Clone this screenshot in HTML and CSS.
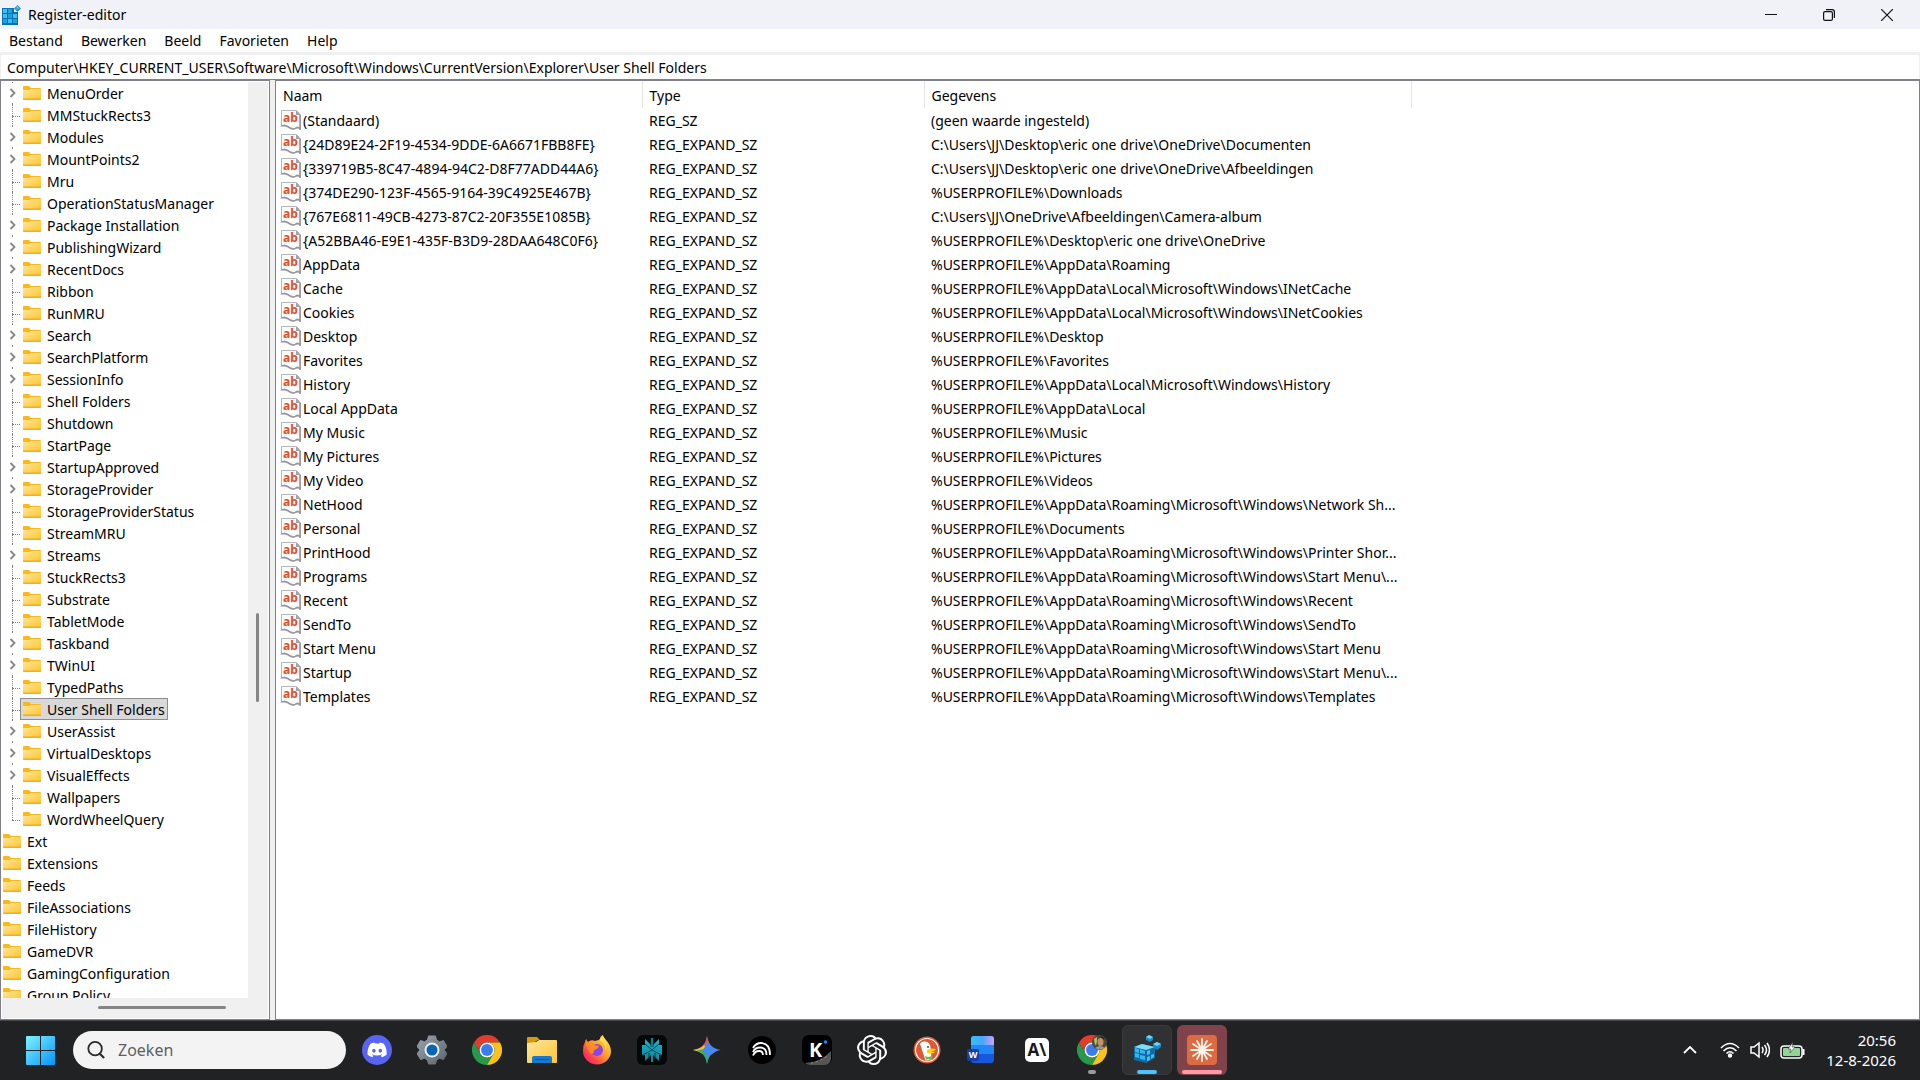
FILE: index.html
```html
<!DOCTYPE html>
<html lang="nl">
<head>
<meta charset="utf-8">
<meta name="viewport" content="width=device-width, initial-scale=1">
<title>Register-editor</title>
<link rel="stylesheet" href="styles.css">
</head>
<body>
<svg class="defs" aria-hidden="true">
  <defs>
    <linearGradient id="gFolder" x1="0" y1="0" x2="1" y2="1"><stop offset="0" stop-color="#ffe69c"/><stop offset="1" stop-color="#fdc62f"/></linearGradient>
    <linearGradient id="gWin" x1="0" y1="0" x2="1" y2="1"><stop offset="0" stop-color="#7df4ff"/><stop offset="1" stop-color="#0594fb"/></linearGradient>
    <linearGradient id="gFox" x1="1" y1="0" x2="0" y2="1"><stop offset="0" stop-color="#fff44f"/><stop offset=".45" stop-color="#ff9a2a"/><stop offset=".75" stop-color="#ff3b50"/><stop offset="1" stop-color="#e31587"/></linearGradient>
    <linearGradient id="gWord" x1="0" y1="0" x2="1" y2="0"><stop offset="0" stop-color="#2ec4f6"/><stop offset=".5" stop-color="#4aa6ff"/><stop offset="1" stop-color="#c9a2ff"/></linearGradient>
    <linearGradient id="gGear" x1="0" y1="0" x2="1" y2="1"><stop offset="0" stop-color="#9aa3ab"/><stop offset="1" stop-color="#5c646c"/></linearGradient>
    <linearGradient id="gPplx" x1="0" y1="0" x2="0" y2="1"><stop offset="0" stop-color="#1fb8cd"/><stop offset="1" stop-color="#0e7f92"/></linearGradient>
  </defs>
  <symbol id="folder" viewBox="0 0 18 14">
    <path d="M0 1q0-1 1-1h5l2 2h9q1 0 1 1v10q0 1-1 1H1q-1 0-1-1z" fill="#fbb917"/>
    <path d="M0 4h7l1-1h10v10H0z" fill="url(#gFolder)"/>
    <path d="M0 13h18" stroke="#eda81c"/>
  </symbol>
  <symbol id="chev" viewBox="0 0 8 10"><path d="M1.5 1l4 4-4 4" fill="none" stroke="#868686" stroke-width="1.8"/></symbol>
  <symbol id="ab" viewBox="0 0 20 20">
    <path d="M.5 .5h15l4 4v14.500q-2.500-1.500-4.500-1t-4 .8-4.500-2.300-6-.5z" fill="#fafafa" stroke="#b5b5b5"/>
    <path d="M.5 16q3.500-1 6 .5t4.500 2.300 4-.8 4 1V5" fill="none" stroke="#989898" stroke-width="1.600"/>
    <path d="M15 .5v4.500h4.500z" fill="#a2a2a2"/>
    <text x="2" y="12" font-size="12" font-weight="700" fill="#d9512c" font-family="Open Sans, sans-serif">ab</text>
  </symbol>
  <symbol id="chrome" viewBox="0 0 48 48">
    <path d="M3.200 12a24 24 0 0 1 41.600 0H24a12 12 0 0 0-10.400 18z" fill="#e33b2e"/>
    <path d="M3.200 12l10.400 18a12 12 0 0 0 20.800 0L24 48A24 24 0 0 1 3.200 12z" fill="#269a4a"/>
    <path d="M44.800 12H24a12 12 0 0 1 10.400 18L24 48a24 24 0 0 0 20.800-36z" fill="#fcc21a"/>
    <circle cx="24" cy="24" r="12" fill="#fff"/><circle cx="24" cy="24" r="9.500" fill="#3b7ded"/>
  </symbol>
</svg>

<header class="titlebar">
  <svg class="app-icon" viewBox="0 0 20 20"><path d="M0 3h12v4h4v13H0z" fill="#0873b3"/><path d="M1 4h4v4H1zM1 9h4v4H1zM6 14h4v4H6zM11 9h4v4h-4z" fill="#41bdf0"/><path d="M6 4h4v4H6zM6 9h4v4H6zM1 14h4v4H1zM11 14h4v4h-4z" fill="#1da0df"/><path d="M15.500 0L19 3.500 15.500 7 12 3.500z" fill="#2b94c8"/><path d="M15.500 1L17 3.500H14z" fill="#7ad2f4"/></svg>
  <h1 class="title">Register-editor</h1>
  <div class="window-buttons">
    <button type="button" aria-label="Minimaliseren"><svg viewBox="0 0 12 12"><path d="M0 5.500h12" stroke="#111"/></svg></button>
    <button type="button" aria-label="Vorig formaat"><svg viewBox="0 0 12 12" fill="none" stroke="#111" stroke-width="1.200"><rect x=".6" y="2.600" width="8.800" height="8.800" rx="1.500"/><path d="M3 .6h6q2.400 0 2.400 2.400v6"/></svg></button>
    <button type="button" aria-label="Sluiten"><svg viewBox="0 0 12 12"><path d="M0 0l12 12M12 0L0 12" stroke="#111" stroke-width="1.200"/></svg></button>
  </div>
</header>
<nav class="menubar" aria-label="Menu">
  <button type="button">Bestand</button><button type="button">Bewerken</button><button type="button">Beeld</button><button type="button">Favorieten</button><button type="button">Help</button>
</nav>
<div class="address"><input type="text" aria-label="Adres" value="Computer\HKEY_CURRENT_USER\Software\Microsoft\Windows\CurrentVersion\Explorer\User Shell Folders"></div>

<main class="panes">
  <section class="tree-pane" aria-label="Sleutels">
    <ul class="tree">
      <li class="child"><button class="twist" type="button" aria-label="Uitvouwen"><svg><use href="#chev"/></svg></button><span class="node"><svg><use href="#folder"/></svg>MenuOrder</span></li>
      <li class="child leaf"><span class="node"><svg><use href="#folder"/></svg>MMStuckRects3</span></li>
      <li class="child"><button class="twist" type="button" aria-label="Uitvouwen"><svg><use href="#chev"/></svg></button><span class="node"><svg><use href="#folder"/></svg>Modules</span></li>
      <li class="child"><button class="twist" type="button" aria-label="Uitvouwen"><svg><use href="#chev"/></svg></button><span class="node"><svg><use href="#folder"/></svg>MountPoints2</span></li>
      <li class="child leaf"><span class="node"><svg><use href="#folder"/></svg>Mru</span></li>
      <li class="child leaf"><span class="node"><svg><use href="#folder"/></svg>OperationStatusManager</span></li>
      <li class="child"><button class="twist" type="button" aria-label="Uitvouwen"><svg><use href="#chev"/></svg></button><span class="node"><svg><use href="#folder"/></svg>Package Installation</span></li>
      <li class="child"><button class="twist" type="button" aria-label="Uitvouwen"><svg><use href="#chev"/></svg></button><span class="node"><svg><use href="#folder"/></svg>PublishingWizard</span></li>
      <li class="child"><button class="twist" type="button" aria-label="Uitvouwen"><svg><use href="#chev"/></svg></button><span class="node"><svg><use href="#folder"/></svg>RecentDocs</span></li>
      <li class="child leaf"><span class="node"><svg><use href="#folder"/></svg>Ribbon</span></li>
      <li class="child leaf"><span class="node"><svg><use href="#folder"/></svg>RunMRU</span></li>
      <li class="child"><button class="twist" type="button" aria-label="Uitvouwen"><svg><use href="#chev"/></svg></button><span class="node"><svg><use href="#folder"/></svg>Search</span></li>
      <li class="child"><button class="twist" type="button" aria-label="Uitvouwen"><svg><use href="#chev"/></svg></button><span class="node"><svg><use href="#folder"/></svg>SearchPlatform</span></li>
      <li class="child"><button class="twist" type="button" aria-label="Uitvouwen"><svg><use href="#chev"/></svg></button><span class="node"><svg><use href="#folder"/></svg>SessionInfo</span></li>
      <li class="child leaf"><span class="node"><svg><use href="#folder"/></svg>Shell Folders</span></li>
      <li class="child leaf"><span class="node"><svg><use href="#folder"/></svg>Shutdown</span></li>
      <li class="child leaf"><span class="node"><svg><use href="#folder"/></svg>StartPage</span></li>
      <li class="child"><button class="twist" type="button" aria-label="Uitvouwen"><svg><use href="#chev"/></svg></button><span class="node"><svg><use href="#folder"/></svg>StartupApproved</span></li>
      <li class="child"><button class="twist" type="button" aria-label="Uitvouwen"><svg><use href="#chev"/></svg></button><span class="node"><svg><use href="#folder"/></svg>StorageProvider</span></li>
      <li class="child leaf"><span class="node"><svg><use href="#folder"/></svg>StorageProviderStatus</span></li>
      <li class="child leaf"><span class="node"><svg><use href="#folder"/></svg>StreamMRU</span></li>
      <li class="child"><button class="twist" type="button" aria-label="Uitvouwen"><svg><use href="#chev"/></svg></button><span class="node"><svg><use href="#folder"/></svg>Streams</span></li>
      <li class="child leaf"><span class="node"><svg><use href="#folder"/></svg>StuckRects3</span></li>
      <li class="child leaf"><span class="node"><svg><use href="#folder"/></svg>Substrate</span></li>
      <li class="child leaf"><span class="node"><svg><use href="#folder"/></svg>TabletMode</span></li>
      <li class="child"><button class="twist" type="button" aria-label="Uitvouwen"><svg><use href="#chev"/></svg></button><span class="node"><svg><use href="#folder"/></svg>Taskband</span></li>
      <li class="child"><button class="twist" type="button" aria-label="Uitvouwen"><svg><use href="#chev"/></svg></button><span class="node"><svg><use href="#folder"/></svg>TWinUI</span></li>
      <li class="child leaf"><span class="node"><svg><use href="#folder"/></svg>TypedPaths</span></li>
      <li class="child leaf"><span class="node selected"><svg><use href="#folder"/></svg>User Shell Folders</span></li>
      <li class="child"><button class="twist" type="button" aria-label="Uitvouwen"><svg><use href="#chev"/></svg></button><span class="node"><svg><use href="#folder"/></svg>UserAssist</span></li>
      <li class="child"><button class="twist" type="button" aria-label="Uitvouwen"><svg><use href="#chev"/></svg></button><span class="node"><svg><use href="#folder"/></svg>VirtualDesktops</span></li>
      <li class="child"><button class="twist" type="button" aria-label="Uitvouwen"><svg><use href="#chev"/></svg></button><span class="node"><svg><use href="#folder"/></svg>VisualEffects</span></li>
      <li class="child leaf"><span class="node"><svg><use href="#folder"/></svg>Wallpapers</span></li>
      <li class="child leaf last"><span class="node"><svg><use href="#folder"/></svg>WordWheelQuery</span></li>
      <li><span class="node"><svg><use href="#folder"/></svg>Ext</span></li>
      <li><span class="node"><svg><use href="#folder"/></svg>Extensions</span></li>
      <li><span class="node"><svg><use href="#folder"/></svg>Feeds</span></li>
      <li><span class="node"><svg><use href="#folder"/></svg>FileAssociations</span></li>
      <li><span class="node"><svg><use href="#folder"/></svg>FileHistory</span></li>
      <li><span class="node"><svg><use href="#folder"/></svg>GameDVR</span></li>
      <li><span class="node"><svg><use href="#folder"/></svg>GamingConfiguration</span></li>
      <li><span class="node"><svg><use href="#folder"/></svg>Group Policy</span></li>
    </ul>
    <div class="vscroll"><i></i></div>
    <div class="hscroll"><i></i></div>
  </section>

  <section class="list-pane" aria-label="Waarden">
    <table>
      <colgroup><col class="c-name"><col class="c-type"><col class="c-data"><col></colgroup>
      <thead><tr><th scope="col">Naam</th><th scope="col">Type</th><th scope="col">Gegevens</th><td></td></tr></thead>
      <tbody>
        <tr><td><svg><use href="#ab"/></svg>(Standaard)</td><td>REG_SZ</td><td>(geen waarde ingesteld)</td></tr>
        <tr><td><svg><use href="#ab"/></svg>{24D89E24-2F19-4534-9DDE-6A6671FBB8FE}</td><td>REG_EXPAND_SZ</td><td>C:\Users\JJ\Desktop\eric one drive\OneDrive\Documenten</td></tr>
        <tr><td><svg><use href="#ab"/></svg>{339719B5-8C47-4894-94C2-D8F77ADD44A6}</td><td>REG_EXPAND_SZ</td><td>C:\Users\JJ\Desktop\eric one drive\OneDrive\Afbeeldingen</td></tr>
        <tr><td><svg><use href="#ab"/></svg>{374DE290-123F-4565-9164-39C4925E467B}</td><td>REG_EXPAND_SZ</td><td>%USERPROFILE%\Downloads</td></tr>
        <tr><td><svg><use href="#ab"/></svg>{767E6811-49CB-4273-87C2-20F355E1085B}</td><td>REG_EXPAND_SZ</td><td>C:\Users\JJ\OneDrive\Afbeeldingen\Camera-album</td></tr>
        <tr><td><svg><use href="#ab"/></svg>{A52BBA46-E9E1-435F-B3D9-28DAA648C0F6}</td><td>REG_EXPAND_SZ</td><td>%USERPROFILE%\Desktop\eric one drive\OneDrive</td></tr>
        <tr><td><svg><use href="#ab"/></svg>AppData</td><td>REG_EXPAND_SZ</td><td>%USERPROFILE%\AppData\Roaming</td></tr>
        <tr><td><svg><use href="#ab"/></svg>Cache</td><td>REG_EXPAND_SZ</td><td>%USERPROFILE%\AppData\Local\Microsoft\Windows\INetCache</td></tr>
        <tr><td><svg><use href="#ab"/></svg>Cookies</td><td>REG_EXPAND_SZ</td><td>%USERPROFILE%\AppData\Local\Microsoft\Windows\INetCookies</td></tr>
        <tr><td><svg><use href="#ab"/></svg>Desktop</td><td>REG_EXPAND_SZ</td><td>%USERPROFILE%\Desktop</td></tr>
        <tr><td><svg><use href="#ab"/></svg>Favorites</td><td>REG_EXPAND_SZ</td><td>%USERPROFILE%\Favorites</td></tr>
        <tr><td><svg><use href="#ab"/></svg>History</td><td>REG_EXPAND_SZ</td><td>%USERPROFILE%\AppData\Local\Microsoft\Windows\History</td></tr>
        <tr><td><svg><use href="#ab"/></svg>Local AppData</td><td>REG_EXPAND_SZ</td><td>%USERPROFILE%\AppData\Local</td></tr>
        <tr><td><svg><use href="#ab"/></svg>My Music</td><td>REG_EXPAND_SZ</td><td>%USERPROFILE%\Music</td></tr>
        <tr><td><svg><use href="#ab"/></svg>My Pictures</td><td>REG_EXPAND_SZ</td><td>%USERPROFILE%\Pictures</td></tr>
        <tr><td><svg><use href="#ab"/></svg>My Video</td><td>REG_EXPAND_SZ</td><td>%USERPROFILE%\Videos</td></tr>
        <tr><td><svg><use href="#ab"/></svg>NetHood</td><td>REG_EXPAND_SZ</td><td>%USERPROFILE%\AppData\Roaming\Microsoft\Windows\Network Sh...</td></tr>
        <tr><td><svg><use href="#ab"/></svg>Personal</td><td>REG_EXPAND_SZ</td><td>%USERPROFILE%\Documents</td></tr>
        <tr><td><svg><use href="#ab"/></svg>PrintHood</td><td>REG_EXPAND_SZ</td><td>%USERPROFILE%\AppData\Roaming\Microsoft\Windows\Printer Shor...</td></tr>
        <tr><td><svg><use href="#ab"/></svg>Programs</td><td>REG_EXPAND_SZ</td><td>%USERPROFILE%\AppData\Roaming\Microsoft\Windows\Start Menu\...</td></tr>
        <tr><td><svg><use href="#ab"/></svg>Recent</td><td>REG_EXPAND_SZ</td><td>%USERPROFILE%\AppData\Roaming\Microsoft\Windows\Recent</td></tr>
        <tr><td><svg><use href="#ab"/></svg>SendTo</td><td>REG_EXPAND_SZ</td><td>%USERPROFILE%\AppData\Roaming\Microsoft\Windows\SendTo</td></tr>
        <tr><td><svg><use href="#ab"/></svg>Start Menu</td><td>REG_EXPAND_SZ</td><td>%USERPROFILE%\AppData\Roaming\Microsoft\Windows\Start Menu</td></tr>
        <tr><td><svg><use href="#ab"/></svg>Startup</td><td>REG_EXPAND_SZ</td><td>%USERPROFILE%\AppData\Roaming\Microsoft\Windows\Start Menu\...</td></tr>
        <tr><td><svg><use href="#ab"/></svg>Templates</td><td>REG_EXPAND_SZ</td><td>%USERPROFILE%\AppData\Roaming\Microsoft\Windows\Templates</td></tr>
      </tbody>
    </table>
  </section>
</main>

<footer class="taskbar">
  <button class="start" type="button" aria-label="Start"><svg viewBox="0 0 29 29"><path d="M1 0h13v14H0V1q0-1 1-1zM15 0h13q1 0 1 1v13H15zM0 15h14v14H1q-1 0-1-1zM15 15h14v13q0 1-1 1H15z" fill="url(#gWin)"/></svg></button>
  <label class="search"><svg viewBox="0 0 20 20" fill="none" stroke="#2b2b2b" stroke-width="2"><circle cx="9" cy="8.500" r="7.500"/><path d="M14 14l5 5" stroke-width="2.400"/></svg><input type="text" placeholder="Zoeken" aria-label="Zoeken"></label>
  <div class="apps">
    <button type="button" aria-label="Discord"><svg viewBox="0 0 30 30"><circle cx="15" cy="15" r="15" fill="#5865f2"/><g transform="translate(5.500 5.300) scale(.8)"><path fill="#fff" d="M20.317 4.3698a19.7913 19.7913 0 00-4.8851-1.5152.0741.0741 0 00-.0785.0371c-.211.3753-.4447.8648-.6083 1.2495-1.8447-.2762-3.68-.2762-5.4868 0-.1636-.3933-.4058-.8742-.6177-1.2495a.077.077 0 00-.0785-.037 19.7363 19.7363 0 00-4.8852 1.515.0699.0699 0 00-.0321.0277C.5334 9.0458-.319 13.5799.0992 18.0578a.0824.0824 0 00.0312.0561c2.0528 1.5076 4.0413 2.4228 5.9929 3.0294a.0777.0777 0 00.0842-.0276c.4616-.6304.8731-1.2952 1.226-1.9942a.076.076 0 00-.0416-.1057c-.6528-.2476-1.2743-.5495-1.8722-.8923a.077.077 0 01-.0076-.1277c.1258-.0943.2517-.1923.3718-.2914a.0743.0743 0 01.0776-.0105c3.9278 1.7933 8.18 1.7933 12.0614 0a.0739.0739 0 01.0785.0095c.1202.099.246.1981.3728.2924a.077.077 0 01-.0066.1276 12.2986 12.2986 0 01-1.873.8914.0766.0766 0 00-.0407.1067c.3604.698.7719 1.3628 1.225 1.9932a.076.076 0 00.0842.0286c1.961-.6067 3.9495-1.5219 6.0023-3.0294a.077.077 0 00.0313-.0552c.5004-5.177-.8382-9.6739-3.5485-13.6604a.061.061 0 00-.0312-.0286zM8.02 15.3312c-1.1825 0-2.1569-1.0857-2.1569-2.419 0-1.3332.9555-2.4189 2.157-2.4189 1.2108 0 2.1757 1.0952 2.1568 2.419 0 1.3332-.9555 2.4189-2.1569 2.4189zm7.9748 0c-1.1825 0-2.1569-1.0857-2.1569-2.419 0-1.3332.9554-2.4189 2.1569-2.4189 1.2108 0 2.1757 1.0952 2.1568 2.419 0 1.3332-.946 2.4189-2.1568 2.4189Z"/></g></svg></button>
    <button type="button" aria-label="Instellingen"><svg viewBox="0 0 30 30"><path d="M11.500 1h7l1 4 3 1.800 4-1.200L30 11.500 27 15l3 3.500-3.500 6-4-1.200-3 1.700-1 4h-7l-1-4-3-1.700-4 1.200L0 18.500 3 15 0 11.500l3.500-6 4 1.200 3-1.700z" fill="url(#gGear)" stroke="url(#gGear)" stroke-linejoin="round"/><circle cx="15" cy="15" r="7.500" fill="#e9eef2"/><circle cx="15" cy="15" r="5.500" fill="#0a64b4"/></svg></button>
    <button type="button" aria-label="Chrome"><svg><use href="#chrome"/></svg></button>
    <button type="button" aria-label="Verkenner"><svg viewBox="0 0 30 30"><path d="M0 3q0-1 1-1h9l3 3h-2L0 12z" fill="#d99a08"/><path d="M0 8l9-1 3-2h17q1 0 1 1v21q0 1-1 1H1q-1 0-1-1z" fill="url(#gFolder)"/><path d="M5 28v-5q0-2 2-2h16q2 0 2 2v5z" fill="#1679cf"/><path d="M8 24.500h14" stroke="#0d5396"/></svg></button>
    <button type="button" aria-label="Firefox"><svg viewBox="0 0 30 30"><path d="M1 16q-.5-5 2-9 0-2 1.500-3 0 2 1.500 3Q9 4 13 6q3-1 4.500-1 0-3 3-5 1 3 3 4.500 5 5 5.500 11.500A14 13.500 0 0 1 1 16z" fill="url(#gFox)"/><circle cx="15" cy="15" r="6" fill="#8a45e8"/><path d="M4 7q4-1 8 2 0 1.500 3 1.500 2 0 2 1-1.500 2.500-4 3-2 1-1.500 3.500Q8 20 7 16q-3-3-3-9z" fill="#ff8b24"/><path d="M17 5q6 2 6.500 10 3-7-3-15-1 3-3.500 5z" fill="#ffe04a"/></svg></button>
    <button type="button" aria-label="Perplexity"><svg viewBox="0 0 30 30"><rect width="30" height="30" rx="6" fill="#050808"/><path d="M5 10h3V4l6 6V3h2v7l6-6v6h3v10h-3v6l-6-6v7h-2v-7l-6 6v-6H5z" fill="url(#gPplx)"/><path d="M15 15L5 20.500M15 15l10 5.500M15 15L8 9M15 15l7-6M12 18v6M18 18v6M14 3v9M16 3v9" fill="none" stroke="#053c45" stroke-width=".9"/></svg></button>
    <button type="button" aria-label="Gemini"><svg viewBox="0 0 30 30"><path d="M15 1q1.500 12.500 14 14-12.500 1.500-14 14-1.500-12.500-14-14 12.500-1.500 14-14z" fill="#4688f4"/><path d="M15 1q-1.500 12.500-14 14l14 1 5-4q-4-4-5-11z" fill="#ea5350"/><path d="M1 15q8-1 11-5l4 5-5 4q-4-3-10-4z" fill="#eebf2d"/><path d="M5 15.700q9 2 10 13.300 1-5 2.500-8L12 14z" fill="#35ac60"/><path d="M16 6l-5 9 5 7 10-7q-8-2-10-9z" fill="#4688f4"/></svg></button>
    <button type="button" aria-label="Muziek"><svg viewBox="0 0 30 30"><circle cx="15" cy="15" r="14" fill="#000"/><g fill="none" stroke="#fff" stroke-width="1.800"><path d="M6 13q3-5 8-5 9 0 9 12M6 17q2-4.500 7-4.500 6.500 0 6.500 7.500M6 20.500q2-4.500 6-4.500 4 0 4 4"/></g></svg></button>
    <button type="button" aria-label="Kimi"><svg viewBox="0 0 30 30"><rect width="30" height="30" rx="7" fill="#000"/><path d="M3 28q15 0 26-12v8q-1 6-7 6H8q-3 0-5-2z" fill="#555"/><path d="M9 28q8-1 18-8" stroke="#999" stroke-dasharray="2 3" fill="none"/><text x="7" y="22" font-size="20" font-weight="700" fill="#fff" font-family="Open Sans, sans-serif">K</text><circle cx="23.500" cy="7" r="1.800" fill="#1688ff"/></svg></button>
    <button type="button" aria-label="ChatGPT"><svg viewBox="0 0 24 24"><path fill="#fff" d="M22.2819 9.8211a5.9847 5.9847 0 0 0-.5157-4.9108 6.0462 6.0462 0 0 0-6.5098-2.9A6.0651 6.0651 0 0 0 4.9807 4.1818a5.9847 5.9847 0 0 0-3.9977 2.9 6.0462 6.0462 0 0 0 .7427 7.0966 5.98 5.98 0 0 0 .511 4.9107 6.051 6.051 0 0 0 6.5146 2.9001A5.9847 5.9847 0 0 0 13.2599 24a6.0557 6.0557 0 0 0 5.7718-4.2058 5.9894 5.9894 0 0 0 3.9977-2.9001 6.0557 6.0557 0 0 0-.7475-7.0729zm-9.022 12.6081a4.4755 4.4755 0 0 1-2.8764-1.0408l.1419-.0804 4.7783-2.7582a.7948.7948 0 0 0 .3927-.6813v-6.7369l2.02 1.1686a.071.071 0 0 1 .038.052v5.5826a4.504 4.504 0 0 1-4.4945 4.4944zm-9.6607-4.1254a4.4708 4.4708 0 0 1-.5346-3.0137l.142.0852 4.783 2.7582a.7712.7712 0 0 0 .7806 0l5.8428-3.3685v2.3324a.0804.0804 0 0 1-.0332.0615L9.74 19.9502a4.4992 4.4992 0 0 1-6.1408-1.6464zM2.3408 7.8956a4.485 4.485 0 0 1 2.3655-1.9728V11.6a.7664.7664 0 0 0 .3879.6765l5.8144 3.3543-2.0201 1.1685a.0757.0757 0 0 1-.071 0l-4.8303-2.7865A4.504 4.504 0 0 1 2.3408 7.872zm16.5963 3.8558L13.1038 8.364 15.1192 7.2a.0757.0757 0 0 1 .071 0l4.8303 2.7913a4.4944 4.4944 0 0 1-.6765 8.1042v-5.6772a.79.79 0 0 0-.407-.667zm2.0107-3.0231l-.142-.0852-4.7735-2.7818a.7759.7759 0 0 0-.7854 0L9.409 9.2297V6.8974a.0662.0662 0 0 1 .0284-.0615l4.8303-2.7866a4.4992 4.4992 0 0 1 6.6802 4.66zM8.3065 12.863l-2.02-1.1638a.0804.0804 0 0 1-.038-.0567V6.0742a4.4992 4.4992 0 0 1 7.3757-3.4537l-.142.0805L8.704 5.459a.7948.7948 0 0 0-.3927.6813zm1.0976-2.3654l2.602-1.4998 2.6069 1.4998v2.9994l-2.5974 1.4997-2.6067-1.4997Z"/></svg></button>
    <button type="button" aria-label="DuckDuckGo"><svg viewBox="0 0 30 30"><circle cx="15" cy="15" r="13.500" fill="#de5833"/><circle cx="15" cy="15" r="11.500" fill="none" stroke="#fff" stroke-width="1.200"/><path d="M8 9q1-3 5-2.500 5 .5 5.500 6l1 11q-3 2.500-6 2L10 15Q9 11 8 9z" fill="#fff"/><path d="M15 15q4-2.500 9-1-1 2-5 2.500l4 .5q-3 3-8 1z" fill="#fdd20a"/><path d="M13 21l3 1 4-1v4l-4-1-2 1z" fill="#65bc46"/><circle cx="16" cy="12" r="1" fill="#2d4f8e"/></svg></button>
    <button type="button" aria-label="Word"><svg viewBox="0 0 30 30"><rect x="4" y="1" width="23" height="27" rx="3" fill="#1658dc"/><path d="M7 1h17q3 0 3 3v6H4V4q0-3 3-3z" fill="url(#gWord)"/><path d="M4 10h23v9H4z" fill="#2386f6"/><rect x="0" y="14" width="12" height="12" rx="2" fill="#123fa8"/><text x="6" y="23" font-size="9" font-weight="700" text-anchor="middle" fill="#fff" font-family="Open Sans, sans-serif">W</text></svg></button>
    <button type="button" aria-label="Anthropic"><svg viewBox="0 0 30 30"><rect x="3" y="3" width="24" height="24" rx="5" fill="#fff"/><text x="15" y="21" font-size="17" font-weight="700" text-anchor="middle" fill="#181818" font-family="Open Sans, sans-serif">A\</text></svg></button>
    <button class="running" type="button" aria-label="Chrome-profiel"><svg viewBox="0 0 30 30"><use href="#chrome" width="30" height="30"/><circle cx="22.500" cy="7.500" r="7.500" fill="#4d4a35"/><path d="M17 4l3-2v4l-1 5q-2-3-2-7z" fill="#a5c866"/><ellipse cx="23.500" cy="7" rx="3" ry="4" fill="#c98d6b"/><path d="M20 5q3-5 7 0l1-2-4-2z" fill="#3a2417"/><path d="M18 13q5-4 10 0-5 3-10 0z" fill="#8e9aa5"/></svg></button>
    <button class="running active" type="button" aria-label="Register-editor"><svg viewBox="0 0 30 30"><path d="M2 12l8-3 13 3v11l-9 5-12-3z" fill="#0c6ea5"/><path d="M2 12l8-3 13 3-9 3z" fill="#7fdcfb"/><path d="M3 13l4 1v4l-4-1zM8 14l5 2v3l-5-1zM3 18l4 1v4l-4-1zM8 20l5 1v4l-5-1z" fill="#37b5ec"/><path d="M15 16l3-1v4l-3 1zM19 20l3-1v3l-3 2zM15 22l3-1v4l-3 1z" fill="#45bdf0"/><path d="M14 2l3-2 4 2v3l-3 2-4-2zM21 9l4-2 4 2v3l-4 3-4-3z" fill="#158ac4"/><path d="M14 2l3-2 4 2-3 2zM21 9l4-2 4 2-4 2z" fill="#6fd3f7"/></svg></button>
    <button class="running alert" type="button" aria-label="Claude"><svg viewBox="0 0 30 30"><rect width="30" height="30" rx="4" fill="#dc6b43"/><path d="M15 15V4M15 15l5-9M15 15l9-6M15 15l11 0M15 15l9 6M15 15l5 9M15 15v11M15 15l-5 9M15 15l-9 6M15 15H4M15 15L6 9M15 15l-5-9" stroke="#fff3ea" stroke-width="1.800" stroke-linecap="round"/></svg></button>
  </div>
  <div class="tray">
    <button class="more" type="button" aria-label="Verborgen pictogrammen"><svg viewBox="0 0 14 8"><path d="M1 7l6-6 6 6" fill="none" stroke="#fff" stroke-width="1.800"/></svg></button>
    <svg class="wifi" viewBox="0 0 20 16" fill="none" stroke="#fff" stroke-width="1.600"><path d="M1 6q9-9 18 0M3.500 9q6.500-6.500 13 0M6.500 11.500q3.500-3.500 7 0"/><circle cx="10" cy="13.500" r="1.400" fill="#fff"/></svg>
    <svg class="vol" viewBox="0 0 20 18" fill="none" stroke="#fff" stroke-width="1.500"><path d="M1 6h3l5-4v14l-5-4H1zM12 6q2 3 0 6M14.500 4q4 5 0 10M17 2q5 7 0 14"/></svg>
    <svg class="bat" viewBox="0 0 25 17"><rect x="1" y="4" width="21" height="12" rx="3" fill="#232527" stroke="#fff" stroke-width="1.500"/><rect x="3" y="6" width="17" height="8" rx="1" fill="#8fd694"/><path d="M23.500 7v6" stroke="#fff" stroke-width="2"/><path d="M13 0L8 7h3l-1 4 5-6h-3z" fill="#fff" stroke="#232527" stroke-width=".5"/></svg>
    <button class="clock" type="button"><time datetime="2026-08-12T20:56">20:56<br>12-8-2026</time></button>
  </div>
</footer>
</body>
</html>
```
FILE: styles.css
```css
* { box-sizing: border-box; }

body {
  margin: 0;
  height: 100vh;
  display: flex;
  flex-direction: column;
  overflow: hidden;
  background: #f0f0f0;
  color: #000;
  font: 14px/22px "Noto Sans", "Open Sans", sans-serif;
}

button, input {
  font: inherit;
  color: inherit;
  border: 0;
  padding: 0;
  background: none;
}

svg { display: block; flex: none; }
.defs { position: absolute; width: 0; height: 0; }

/* Window chrome */
.titlebar {
  display: flex;
  align-items: center;
  flex: none;
  height: 29px;
  padding-left: 2px;
  background: #f0f2f7;
}
.app-icon { width: 20px; height: 20px; }
.title { margin: 0 0 0 6px; font-size: 14px; font-weight: 400; }
.window-buttons { display: flex; margin-left: auto; padding-right: 4px; }
.window-buttons button {
  width: 58px;
  height: 29px;
  display: grid;
  place-items: center;
}
.window-buttons svg { width: 12px; height: 12px; }

.menubar {
  display: flex;
  flex: none;
  gap: 18px;
  height: 23px;
  padding: 1px 0 0 9px;
  background: #fff;
}

.address {
  flex: none;
  height: 28px;
  padding: 3px 1px 0;
  border-bottom: 1px solid #828087;
}
.address input {
  display: block;
  width: 100%;
  height: 24px;
  padding: 0 6px;
  background: #fff;
}

/* Panes */
.panes {
  flex: 1;
  min-height: 0;
  display: grid;
  grid-template-columns: 270px minmax(0, 1fr);
  gap: 5px;
}
.tree-pane, .list-pane {
  min-height: 0;
  border: 1px solid #828087;
  background: #fff;
}
.tree-pane {
  display: grid;
  grid-template: minmax(0, 1fr) 20px / minmax(0, 1fr) 20px;
  padding: 1px;
}
.tree { margin: 0; padding: 0; list-style: none; overflow: hidden; }
.tree li { display: flex; height: 22px; }
.tree .child { padding-left: 18px; position: relative; }
.node {
  display: flex;
  align-items: flex-start;
  padding-right: 2px;
  border: 1px solid transparent;
  white-space: nowrap;
}
.node svg { width: 18px; height: 14px; margin: 3px 6px 0 0; }
.child .node { padding-left: 2px; }
.selected { background: #d9d9d9; border-color: #8e8e8e; }

.child::before, .leaf::after {
  content: "";
  position: absolute;
  left: 10px;
  top: 0;
}
.child::before { height: 22px; border-left: 1px dotted #808080; }
.leaf::after { top: 12px; width: 8px; border-top: 1px dotted #808080; }
.last::before { height: 12px; }
.twist {
  position: absolute;
  left: 5px;
  top: 1px;
  width: 12px;
  height: 20px;
  padding-left: 2px;
  background: #fff;
}
.twist svg { width: 8px; height: 10px; }

.vscroll, .hscroll { background: #f0f0f0; }
.vscroll { grid-area: 1 / 2 / 3 / 3; padding: 531px 0 0 8px; }
.vscroll i { display: block; width: 3px; height: 89px; border-radius: 2px; background: #858585; }
.hscroll { grid-area: 2 / 1; padding: 8px 0 0 96px; }
.hscroll i { display: block; width: 128px; height: 3px; border-radius: 2px; background: #858585; }

table { width: 100%; table-layout: fixed; border-collapse: collapse; }
.c-name { width: 366px; }
.c-type { width: 282px; }
.c-data { width: 487px; }
th, td {
  height: 24px;
  padding: 2px 0 0 7px;
  font-weight: 400;
  text-align: left;
  white-space: nowrap;
  overflow: hidden;
}
th { height: 27px; border-right: 1px solid #e5e5e5; }
td:first-child { display: flex; align-items: flex-start; padding-left: 5px; }
td svg { width: 20px; height: 20px; margin-right: 2px; }

/* Taskbar */
.taskbar {
  flex: none;
  display: flex;
  align-items: center;
  height: 60px;
  padding: 0 24px 1px 26px;
  border-top: 1px solid #45474a;
  background: #202224;
  color: #fff;
}
.start svg { width: 29px; height: 29px; }
.search {
  display: flex;
  align-items: center;
  gap: 13px;
  width: 273px;
  height: 38px;
  margin: 0 6px 0 18px;
  padding: 0 14px;
  border-radius: 19px;
  background: #f3f3f3;
}
.search svg { width: 18px; height: 20px; }
.search input { flex: 1; min-width: 0; font-size: 16px; outline: 0; }
.search input::placeholder { color: #5f5f5f; opacity: 1; }

.apps { display: flex; gap: 5px; }
.apps button {
  position: relative;
  display: grid;
  place-items: center;
  width: 50px;
  height: 50px;
  border-radius: 6px;
}
.apps svg { width: 30px; height: 30px; }
.running::after {
  content: "";
  position: absolute;
  bottom: 1px;
  width: 8px;
  height: 4px;
  border-radius: 2px;
  background: #9a9a9a;
}
.apps .active { background: #2f3133; border: 1px solid #393b3d; }
.active::after { width: 20px; bottom: 0; background: #4cc2ff; }
.apps .alert { background: #80434b; }
.alert::after { width: 40px; background: #ff99a4; }

.tray { display: flex; align-items: center; margin-left: auto; }
.more svg { width: 14px; height: 8px; }
.wifi { width: 20px; height: 16px; margin-left: 23px; }
.vol { width: 20px; height: 18px; margin-left: 10px; }
.bat { width: 25px; height: 17px; margin-left: 10px; }
.clock { margin-left: 21px; text-align: right; font-size: 15px; line-height: 20px; }
.clock time { display: block; }
```
